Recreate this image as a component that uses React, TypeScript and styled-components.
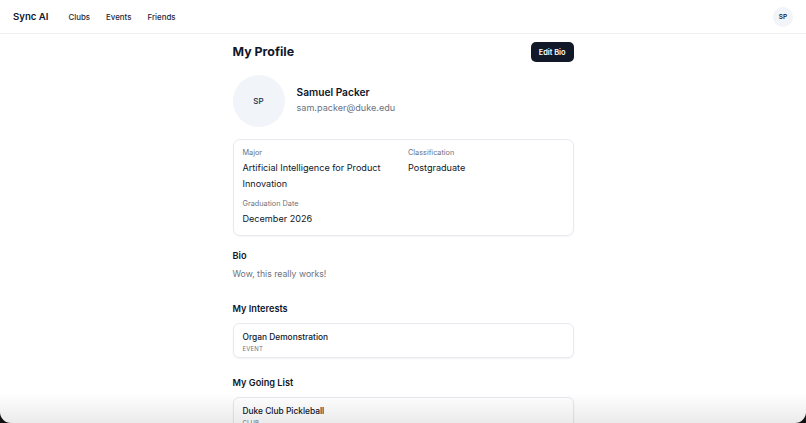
import React from "react";
import styled, { createGlobalStyle } from "styled-components";

const Global = createGlobalStyle`
  * { box-sizing: border-box; }
  html, body { margin: 0; padding: 0; background: #ffffff; }
  body { font-family: Inter, "Noto Sans", "Liberation Sans", sans-serif; color: #0f172a; -webkit-font-smoothing: antialiased; }
`;

const Page = styled.div`
  min-height: 100vh;
  background: #fff;
`;

const Nav = styled.header`
  height: 34px;
  border-bottom: 1px solid #eef0f3;
  display: flex;
  align-items: center;
  padding: 0 13px 0 13px;
`;

const Brand = styled.div`
  font-size: 9.6px;
  font-weight: 600;
  color: #0f172a;
  margin-right: 20px;
`;

const NavLinks = styled.nav`
  display: flex;
  gap: 16px;
  flex: 1;
`;

const NavLink = styled.a`
  font-size: 7.9px;
  font-weight: 500;
  color: #1e293b;
  text-decoration: none;
`;

const Avatar = styled.div<{ $size: number; $font: number; $weight: number }>`
  width: ${(p) => p.$size}px;
  height: ${(p) => p.$size}px;
  border-radius: 50%;
  background: #f1f4f8;
  display: flex;
  align-items: center;
  justify-content: center;
  font-size: ${(p) => p.$font}px;
  font-weight: ${(p) => p.$weight};
  color: #1e293b;
  flex-shrink: 0;
`;

const Main = styled.main`
  width: 341px;
  margin: 0 auto;
  padding-top: 8px;
`;

const HeaderRow = styled.div`
  display: flex;
  align-items: center;
  justify-content: space-between;
  height: 20px;
`;

const Title = styled.h1`
  margin: 0;
  font-size: 12.4px;
  font-weight: 700;
  line-height: 20px;
`;

const Button = styled.button`
  height: 20px;
  padding: 0 8px;
  border: none;
  border-radius: 5px;
  background: #111827;
  color: #fff;
  font-family: inherit;
  font-size: 7.4px;
  font-weight: 600;
`;

const ProfileRow = styled.div`
  display: flex;
  align-items: center;
  gap: 12px;
  margin-top: 13px;
`;

const NameBlock = styled.div`
  display: flex;
  flex-direction: column;
  gap: 2px;
  margin-top: -2px;
`;

const Name = styled.div`
  font-size: 10.2px;
  font-weight: 600;
  line-height: 14px;
`;

const Email = styled.div`
  font-size: 9.1px;
  color: #6b7280;
  line-height: 14px;
`;

const InfoCard = styled.div`
  margin-top: 12px;
  border: 1px solid #e6e9ee;
  border-radius: 7px;
  padding: 8px 9px 8px;
  display: grid;
  grid-template-columns: 1fr 1fr;
  column-gap: 10px;
  row-gap: 7px;
  box-shadow: 0 1px 2px rgba(15, 23, 42, 0.04);
`;

const Field = styled.div`
  display: flex;
  flex-direction: column;
  gap: 2px;
`;

const Label = styled.div`
  font-size: 7.3px;
  color: #6b7280;
  line-height: 10px;
`;

const Value = styled.div`
  font-size: 9.1px;
  line-height: 16px;
  color: #0f172a;
`;

const Section = styled.section<{ $top: number }>`
  margin-top: ${(p) => p.$top}px;
`;

const SectionTitle = styled.h2`
  margin: 0;
  font-size: 9.2px;
  font-weight: 600;
  line-height: 16px;
`;

const BioText = styled.p`
  margin: 2px 0 0;
  font-size: 8.7px;
  line-height: 16px;
  color: #6b7280;
`;

const ItemCard = styled.div`
  margin-top: 6px;
  border: 1px solid #e6e9ee;
  border-radius: 6px;
  padding: 6px 9px 3px;
  box-shadow: 0 1px 2px rgba(15, 23, 42, 0.05);
`;

const ItemTitle = styled.div`
  font-size: 8.4px;
  font-weight: 500;
  line-height: 14px;
  color: #0f172a;
`;

const ItemType = styled.div`
  font-size: 5.9px;
  line-height: 10px;
  color: #6b7280;
  text-transform: uppercase;
  letter-spacing: 0.2px;
`;

const WindowEdge = styled.div`
  position: fixed;
  inset: 0;
  pointer-events: none;
  border-radius: 0 0 11px 11px;
  box-shadow: 0 0 0 30px #111;
  background: linear-gradient(to bottom, rgba(0, 0, 0, 0) 0, rgba(0, 0, 0, 0) calc(100% - 30px), rgba(0, 0, 0, 0.08) 100%);
`;

export default function App() {
  return (
    <Page>
      <Global />
      <Nav>
        <Brand>Sync AI</Brand>
        <NavLinks>
          <NavLink>Clubs</NavLink>
          <NavLink>Events</NavLink>
          <NavLink>Friends</NavLink>
        </NavLinks>
        <Avatar $size={20} $font={6.5} $weight={600}>SP</Avatar>
      </Nav>
      <Main>
        <HeaderRow>
          <Title>My Profile</Title>
          <Button>Edit Bio</Button>
        </HeaderRow>
        <ProfileRow>
          <Avatar $size={52} $font={8} $weight={500}>SP</Avatar>
          <NameBlock>
            <Name>Samuel Packer</Name>
            <Email>sam.packer@duke.edu</Email>
          </NameBlock>
        </ProfileRow>
        <InfoCard>
          <Field>
            <Label>Major</Label>
            <Value>Artificial Intelligence for Product Innovation</Value>
          </Field>
          <Field>
            <Label>Classification</Label>
            <Value>Postgraduate</Value>
          </Field>
          <Field>
            <Label>Graduation Date</Label>
            <Value>December 2026</Value>
          </Field>
        </InfoCard>
        <Section $top={12}>
          <SectionTitle>Bio</SectionTitle>
          <BioText>Wow, this really works!</BioText>
        </Section>
        <Section $top={19}>
          <SectionTitle>My Interests</SectionTitle>
          <ItemCard>
            <ItemTitle>Organ Demonstration</ItemTitle>
            <ItemType>Event</ItemType>
          </ItemCard>
        </Section>
        <Section $top={17}>
          <SectionTitle>My Going List</SectionTitle>
          <ItemCard>
            <ItemTitle>Duke Club Pickleball</ItemTitle>
            <ItemType>Club</ItemType>
          </ItemCard>
        </Section>
      </Main>
      <WindowEdge />
    </Page>
  );
}
